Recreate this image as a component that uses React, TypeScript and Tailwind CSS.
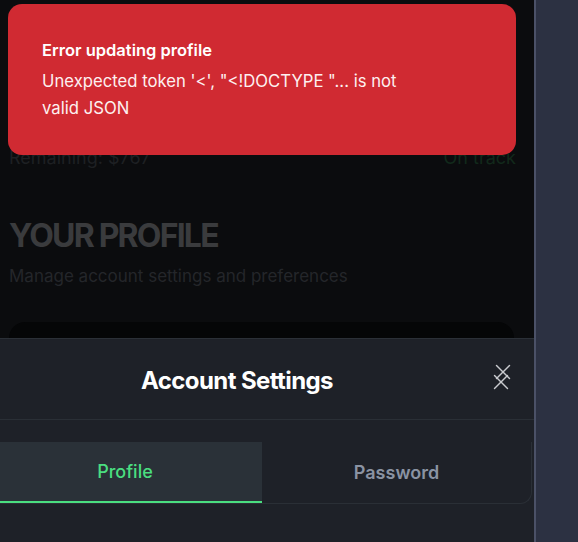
import React from 'react';
import { X } from 'lucide-react';

export default function App() {
  return (
    <div className="flex h-[542px] w-[578px] overflow-hidden font-['Inter',sans-serif]">
      <div className="relative h-full w-[534px] overflow-hidden bg-[#0b0c0e]">
        {/* dimmed page behind the overlay */}
        <div className="px-[9px] pt-[145px]">
          <div className="flex items-center justify-between text-[18px] leading-[26px]">
            <span className="text-[#1e2023]">Remaining: $767</span>
            <span className="mr-[9px] text-[#12291b]">On track</span>
          </div>
          <h1 className="mt-[45px] text-[32px] font-bold leading-[40px] tracking-[-1.8px] text-[#3a3b3d]">
            YOUR PROFILE
          </h1>
          <p className="mt-[7px] text-[17px] leading-[26px] text-[#24262a]">
            Manage account settings and preferences
          </p>
          <div className="mt-[33px] h-[60px] w-[505px] rounded-2xl bg-[#050607]" />
        </div>

        {/* toast */}
        <div className="absolute left-[8px] top-[4px] h-[151px] w-[508px] rounded-[14px] bg-[#d02a32] px-[34px] pt-[34px] text-white">
          <p className="text-[16.5px] font-semibold leading-[24px]">Error updating profile</p>
          <p className="mt-[6px] w-[380px] text-[16.7px] leading-[27px] text-[#fdf0f0]">
            Unexpected token '&lt;', "&lt;!DOCTYPE "... is not valid JSON
          </p>
        </div>

        {/* bottom sheet */}
        <div className="absolute left-0 top-[338px] h-[204px] w-[534px] border-t border-[#2b3037] bg-[#1e2128]">
          <div className="relative flex h-[81px] items-center justify-center border-b border-[#2a2f36] pr-[60px] pt-[3px]">
            <h2 className="text-[24px] font-bold tracking-tight text-white">Account Settings</h2>
            <X className="absolute left-[490px] top-[20px] text-[#c9cbcf]" size={26} strokeWidth={1.3} />
            <X className="absolute left-[488px] top-[30px] text-[#c9cbcf]" size={26} strokeWidth={1.3} />
          </div>
          <div className="ml-[-12px] mt-[22px] flex h-[62px] w-[544px] overflow-hidden rounded-br-xl border-b border-r border-[#2a2f36]">
            <div className="flex w-[274px] items-center justify-center border-b-2 border-[#4ade80] bg-[#2a3138] text-[18px] font-medium text-[#4ade80]">
              Profile
            </div>
            <div className="flex flex-1 items-center justify-center text-[18px] font-semibold text-[#8a93a3]">
              Password
            </div>
          </div>
        </div>
      </div>
      <div className="h-full flex-1 border-l-2 border-[#4b5167] bg-[#2c3142]" />
    </div>
  );
}
